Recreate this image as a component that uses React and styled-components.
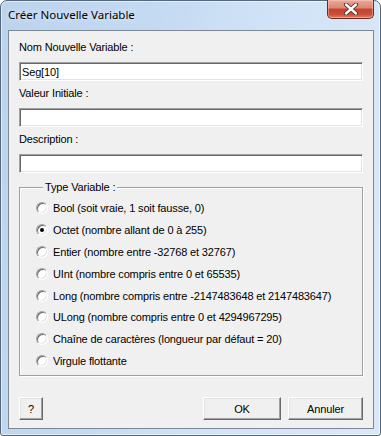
import styled, { createGlobalStyle } from "styled-components";

const GlobalStyle = createGlobalStyle`
  html, body {
    margin: 0;
    padding: 0;
    background: #ffffff;
  }
  * {
    box-sizing: border-box;
  }
`;

const types = [
  { label: "Bool (soit vraie, 1 soit fausse, 0)" },
  { label: "Octet (nombre allant de 0 à 255)", checked: true },
  { label: "Entier (nombre entre -32768 et 32767)" },
  { label: "UInt (nombre compris entre 0 et 65535)" },
  { label: "Long (nombre compris entre -2147483648 et 2147483647)" },
  { label: "ULong (nombre compris entre 0 et 4294967295)" },
  { label: "Chaîne de caractères (longueur par défaut = 20)" },
  { label: "Virgule flottante" },
];

const App = () => {
  return (
    <>
      <GlobalStyle />
      <Window>
        <TitleBar>
          <Title>Créer Nouvelle Variable</Title>
          <CloseButton>
            <svg width="16" height="12" viewBox="0 0 16 12">
              <path
                d="M3 1.5 L13 10.5 M13 1.5 L3 10.5"
                stroke="#4a2a24"
                strokeWidth="4.2"
                strokeLinecap="round"
              />
              <path
                d="M3 1.5 L13 10.5 M13 1.5 L3 10.5"
                stroke="#ffffff"
                strokeWidth="2.4"
                strokeLinecap="round"
              />
            </svg>
          </CloseButton>
        </TitleBar>
        <Client>
          <Field>
            <Label>Nom Nouvelle Variable :</Label>
            <TextBox defaultValue="Seg[10]" />
          </Field>
          <Field>
            <Label>Valeur Initiale :</Label>
            <TextBox defaultValue="" />
          </Field>
          <Field>
            <Label>Description :</Label>
            <TextBox defaultValue="" />
          </Field>
          <GroupBox>
            <Legend>Type Variable :</Legend>
            {types.map((t) => (
              <RadioRow key={t.label}>
                <Radio $checked={t.checked} />
                <span>{t.label}</span>
              </RadioRow>
            ))}
          </GroupBox>
          <ButtonRow>
            <Button $w={24}>?</Button>
            <Spacer />
            <Button $w={78}>OK</Button>
            <Button $w={75}>Annuler</Button>
          </ButtonRow>
        </Client>
      </Window>
    </>
  );
};

const Window = styled.div`
  width: 381px;
  height: 436px;
  border: 1px solid #56687c;
  border-radius: 7px 7px 3px 3px;
  padding: 0 6px 6px 6px;
  display: flex;
  flex-direction: column;
  background: linear-gradient(
    100deg,
    #bcd3ee 0%,
    #c4daf3 35%,
    #d3e4f7 65%,
    #dae8f8 100%
  );
  box-shadow: inset 0 0 0 1px rgba(255, 255, 255, 0.55);
`;

const TitleBar = styled.div`
  height: 29px;
  display: flex;
  align-items: flex-start;
  justify-content: space-between;
`;

const Title = styled.div`
  font-family: "Noto Sans", "Open Sans", sans-serif;
  font-size: 11.5px;
  color: #000;
  padding-left: 1px;
  margin-top: 6px;
  line-height: 16px;
  text-shadow: 0 0 6px rgba(255, 255, 255, 0.9);
`;

const CloseButton = styled.div`
  width: 47px;
  height: 19px;
  margin-top: -1px;
  border: 1px solid #6b2a22;
  border-top: none;
  border-radius: 0 0 5px 5px;
  display: flex;
  align-items: center;
  justify-content: center;
  background: linear-gradient(
    to bottom,
    #e9a99b 0%,
    #dc8572 45%,
    #c5432c 50%,
    #c9503a 80%,
    #e0816b 100%
  );
  box-shadow: inset 0 0 0 1px rgba(255, 210, 200, 0.45);
`;

const Client = styled.div`
  flex: 1;
  margin-left: 1px;
  background: #f0f0f0;
  border: 1px solid #7c8896;
  padding: 10px 10px 8px 10px;
  display: flex;
  flex-direction: column;
  font-family: "Liberation Sans", Arial, sans-serif;
  font-size: 11px;
  letter-spacing: -0.15px;
  color: #000;
`;

const Field = styled.div`
  display: flex;
  flex-direction: column;
  gap: 8px;
  margin-bottom: 6px;
`;

const Label = styled.div`
  line-height: 13px;
  height: 13px;
`;

const TextBox = styled.input`
  height: 19px;
  width: 100%;
  margin: 0;
  padding: 0 2px;
  font-family: "Liberation Sans", Arial, sans-serif;
  font-size: 11px;
  letter-spacing: -0.15px;
  color: #000;
  background: #fff;
  border: 1px solid;
  border-color: #a0a0a0 #ffffff #ffffff #a0a0a0;
  box-shadow: inset 1px 1px 0 #696969, inset -1px -1px 0 #e3e3e3;
  outline: none;
`;

const GroupBox = styled.fieldset`
  margin: 2px 0 0 0;
  padding: 3px 0 3px 16px;
  border: 1px solid #a0a0a0;
  box-shadow: inset 1px 1px 0 #fff, 1px 1px 0 #fff;
  display: flex;
  flex-direction: column;
  min-width: 0;
`;

const Legend = styled.legend`
  margin-left: 7px;
  padding: 0 2px;
  line-height: 13px;
  background: #f0f0f0;
  position: relative;
`;

const RadioRow = styled.div`
  height: 21.9px;
  display: flex;
  align-items: center;
  gap: 5px;
  white-space: nowrap;
`;

const Radio = styled.span`
  width: 12px;
  height: 12px;
  flex: none;
  border-radius: 50%;
  border: 1px solid;
  border-color: #a0a0a0 #ffffff #ffffff #a0a0a0;
  background: #fff;
  box-shadow: inset 1px 1px 0 #696969, inset -1px -1px 0 #e3e3e3;
  display: flex;
  align-items: center;
  justify-content: center;
  &::after {
    content: "";
    width: 4px;
    height: 4px;
    border-radius: 50%;
    background: #000;
    display: ${(p) => (p.$checked ? "block" : "none")};
  }
`;

const ButtonRow = styled.div`
  margin-top: auto;
  display: flex;
  gap: 7px;
`;

const Spacer = styled.div`
  flex: 1;
`;

const Button = styled.div`
  width: ${(p) => p.$w}px;
  height: 23px;
  display: flex;
  align-items: center;
  justify-content: center;
  background: #f0f0f0;
  border: 1px solid;
  border-color: #ffffff #696969 #696969 #ffffff;
  box-shadow: inset -1px -1px 0 #a0a0a0, inset 1px 1px 0 #e3e3e3;
  font-family: "Liberation Sans", Arial, sans-serif;
  font-size: 11px;
`;

export default App;
